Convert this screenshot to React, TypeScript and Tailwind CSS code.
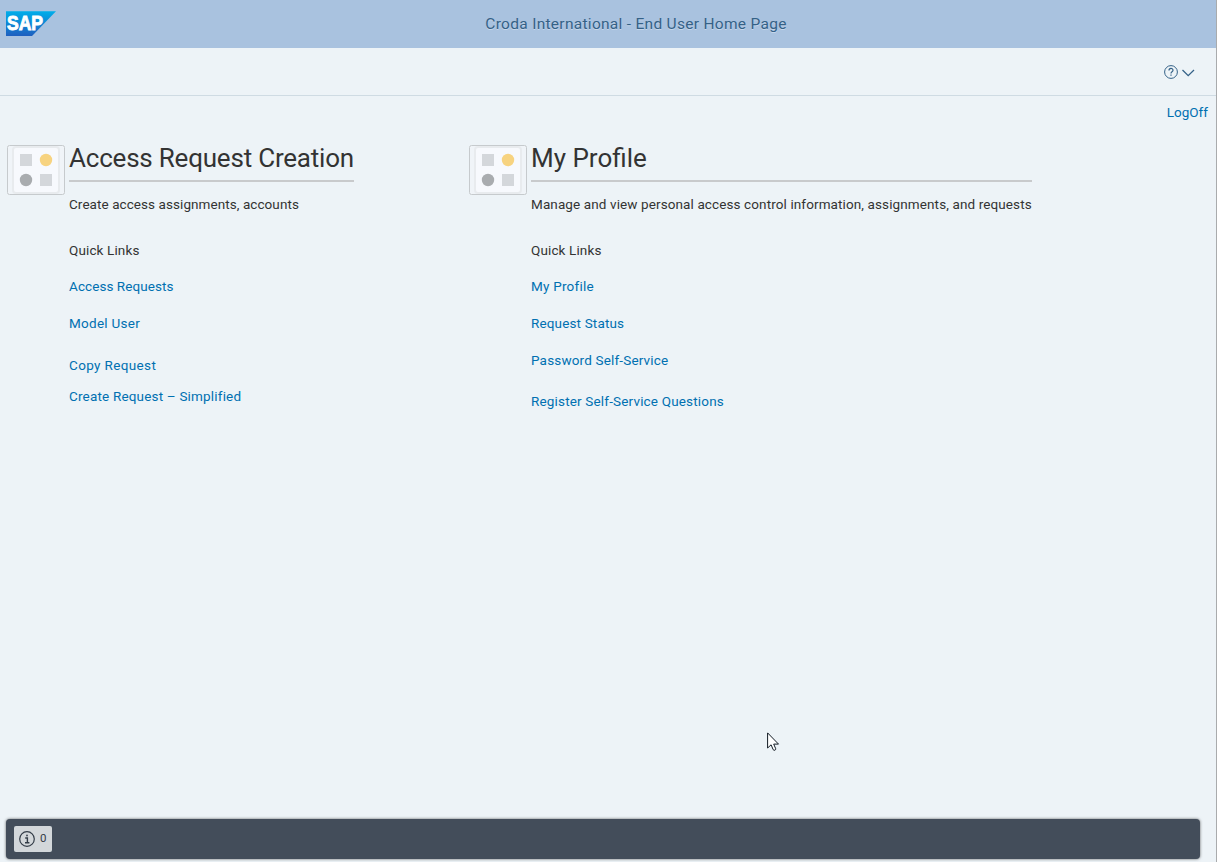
function SapLogo() {
  return (
    <svg width="51" height="26" viewBox="0 0 51 26" className="block">
      <defs>
        <linearGradient id="sap" x1="0" y1="0" x2="0" y2="1">
          <stop offset="0" stopColor="#00aeea" />
          <stop offset="1" stopColor="#1f5fbf" />
        </linearGradient>
      </defs>
      <path d="M0 0.3H50L26 25H0Z" fill="url(#sap)" />
      <text x="1" y="19.3" fill="#fff" stroke="#fff" strokeWidth="0.9" fontFamily="Liberation Sans, sans-serif" fontWeight="700" fontSize="19.5" textLength="36" lengthAdjust="spacingAndGlyphs">SAP</text>
    </svg>
  );
}

function TileIcon() {
  return (
    <svg width="58" height="50" viewBox="0 0 58 50" className="block shrink-0">
      <rect x="0.5" y="0.5" width="57" height="49" rx="2" fill="#f0f4f8" stroke="#c6cacd" />
      <rect x="6" y="2" width="46" height="46" rx="3" fill="#f7f9fd" stroke="#e8ebee" strokeWidth="2" />
      <rect x="13" y="9" width="12" height="12" fill="#d4d7db" />
      <circle cx="39" cy="15" r="6.2" fill="#f7d380" />
      <circle cx="19" cy="35" r="6.2" fill="#a9acaf" />
      <rect x="33" y="29" width="12" height="12" fill="#d4d7db" />
    </svg>
  );
}

type Link = { label: string; className: string };
type SectionProps = { title: string; titleClass: string; description: string; descClass: string; links: Link[] };

function Section({ title, titleClass, description, descClass, links }: SectionProps) {
  return (
    <section className="flex w-[462px] shrink-0 gap-1 pl-[7px]">
      <TileIcon />
      <div className="flex flex-col items-start whitespace-nowrap text-[13.5px] leading-5 text-[#333]">
        <h2 className={`h-[37px] border-b-2 border-[#c8cacc] text-[26px] leading-[27px] ${titleClass}`}>{title}</h2>
        <p className={`mt-3 ${descClass}`}>{description}</p>
        <p className="mt-[26px] tracking-[0.13px]">Quick Links</p>
        {links.map((l) => (
          <a key={l.label} href="#" className={`text-[#0070b1] ${l.className}`}>{l.label}</a>
        ))}
      </div>
    </section>
  );
}

const requestLinks: Link[] = [
  { label: "Access Requests", className: "mt-4 tracking-[0.07px]" },
  { label: "Model User", className: "mt-[17px] tracking-[0.27px]" },
  { label: "Copy Request", className: "mt-[22px] tracking-[0.36px]" },
  { label: "Create Request – Simplified", className: "mt-[11px] tracking-[0.18px]" },
];

const profileLinks: Link[] = [
  { label: "My Profile", className: "mt-4 tracking-[0.22px]" },
  { label: "Request Status", className: "mt-[17px] tracking-[0.15px]" },
  { label: "Password Self-Service", className: "mt-[17px] tracking-[0.17px]" },
  { label: "Register Self-Service Questions", className: "mt-[21px] tracking-[0.17px]" },
];

export default function App() {
  return (
    <div className="relative flex h-[862px] w-[1217px] flex-col overflow-hidden border-r border-[#a9abad] bg-[#edf3f7] font-['Roboto',sans-serif]">
      <header className="-mr-px flex h-12 shrink-0 items-center bg-[#a9c2df] pl-[6px]">
        <SapLogo />
        <h1 className="flex-1 pr-[2px] text-center text-[15.5px] leading-6 tracking-[0.29px] text-[#346187] [text-shadow:0_1px_0_rgba(255,255,255,0.35)]">Croda International - End User Home Page</h1>
      </header>
      <div className="flex h-12 shrink-0 items-center justify-end gap-[3px] border-b border-[#cfdbe3] pr-[21px] text-[#346187]">
        <svg width="14" height="14" viewBox="0 0 14 14" fill="none" stroke="currentColor"><circle cx="7" cy="7" r="6.4" /><path d="M5 5.5C5 2.7 9 2.7 9 5.3C9 7 7 6.6 7 8.5M7 9.5V10.8" strokeWidth="1.2" /></svg>
        <svg width="14" height="14" viewBox="0 0 14 14" fill="none" stroke="currentColor" strokeWidth="1.3"><path d="M1.5 5L7.2 10.7L13 5" /></svg>
      </div>
      <div className="flex h-[49px] shrink-0 justify-end pr-2 pt-[6px]">
        <a href="#" className="text-[13.5px] leading-5 text-[#0070b1]">LogOff</a>
      </div>
      <main className="flex min-h-0 flex-1">
        <Section title="Access Request Creation" titleClass="tracking-[-0.21px]" description="Create access assignments, accounts" descClass="tracking-[0.07px]" links={requestLinks} />
        <Section title="My Profile" titleClass="w-[501px]" description="Manage and view personal access control information, assignments, and requests" descClass="tracking-[0.11px]" links={profileLinks} />
      </main>
      <footer className="mb-[3px] ml-[6px] mr-4 flex h-10 shrink-0 items-center rounded-[4px] bg-[#434d5a] pl-2 shadow-[0_0_3px_rgba(0,0,0,0.6)]">
        <button className="flex h-[26px] w-[38px] items-center gap-[5px] rounded-[2px] bg-[#d3d7da] pl-[5px] text-[11.5px] text-[#333c47]">
          <svg width="16" height="16" viewBox="0 0 16 16" fill="none" stroke="currentColor"><circle cx="8" cy="8" r="7.3" strokeWidth="1.2" /><path d="M6.2 7H8.4V11.5M6 11.7H10.4" strokeWidth="1.4" /><rect x="7.2" y="3.7" width="1.6" height="1.6" fill="currentColor" stroke="none" /></svg>
          <span>0</span>
        </button>
      </footer>
      <svg className="absolute left-[767px] top-[732px]" width="13" height="20" viewBox="0 0 13 20" fill="#fff" stroke="#111922" strokeWidth="1"><path d="M0.6 0.9V16L4.1 12.8L6.2 17.7C7 19 9.2 18 8.7 16.7L6.7 12.1H11.5Z" /></svg>
    </div>
  );
}
